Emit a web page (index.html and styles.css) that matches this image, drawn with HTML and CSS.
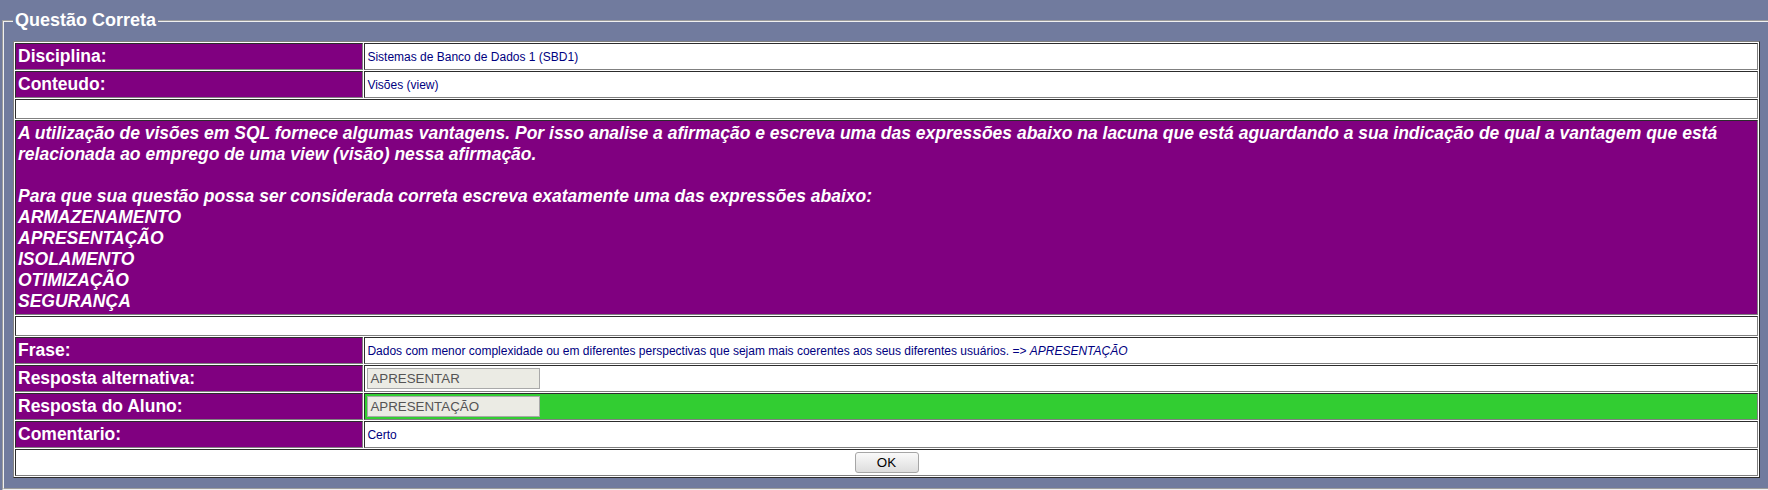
FILE: index.html
```html
<!DOCTYPE html>
<html lang="pt-BR">
<head>
<meta charset="utf-8">
<title>Questão Correta</title>
<link rel="stylesheet" href="styles.css">
</head>
<body>
<fieldset class="panel">
  <legend class="panel-title">Questão Correta</legend>
  <table class="sheet">
    <tr>
      <td class="label">Disciplina:</td>
      <td class="value">Sistemas de Banco de Dados 1 (SBD1)</td>
    </tr>
    <tr>
      <td class="label">Conteudo:</td>
      <td class="value">Visões (view)</td>
    </tr>
    <tr class="gap"><td colspan="2">&nbsp;</td></tr>
    <tr>
      <td class="question" colspan="2">A utilização de visões em SQL fornece algumas vantagens. Por isso analise a afirmação e escreva uma das expressões abaixo na lacuna que está aguardando a sua indicação de qual a vantagem que está relacionada ao emprego de uma view (visão) nessa afirmação.<br><br>Para que sua questão possa ser considerada correta escreva exatamente uma das expressões abaixo:<br>ARMAZENAMENTO<br>APRESENTAÇÃO<br>ISOLAMENTO<br>OTIMIZAÇÃO<br>SEGURANÇA</td>
    </tr>
    <tr class="gap"><td colspan="2">&nbsp;</td></tr>
    <tr>
      <td class="label">Frase:</td>
      <td class="value">Dados com menor complexidade ou em diferentes perspectivas que sejam mais coerentes aos seus diferentes usuários. =&gt; <i>APRESENTAÇÃO</i></td>
    </tr>
    <tr>
      <td class="label">Resposta alternativa:</td>
      <td class="value"><input class="answer" type="text" value="APRESENTAR" readonly></td>
    </tr>
    <tr>
      <td class="label">Resposta do Aluno:</td>
      <td class="value value-correct"><input class="answer" type="text" value="APRESENTAÇÃO" readonly></td>
    </tr>
    <tr>
      <td class="label">Comentario:</td>
      <td class="value">Certo</td>
    </tr>
    <tr>
      <td class="actions" colspan="2"><button class="ok-button" type="button">OK</button></td>
    </tr>
  </table>
</fieldset>
</body>
</html>
```

FILE: styles.css
```css
html, body {
  margin: 0;
  padding: 0;
}

body {
  background: #717b9e;
  font-family: "Liberation Sans", Arial, sans-serif;
  font-size: 12px;
  overflow: hidden;
}

.panel {
  margin: 10px 0 0 2px;
  padding: 10px 9px 10px;
  border: 2px groove #f0f0f0;
  width: 1747px;
  min-width: 0;
}

.panel-title {
  color: #ffffff;
  font-weight: bold;
  font-size: 18px;
  line-height: 21px;
  padding: 0 2px;
}

.sheet {
  width: 100%;
  border: 1px outset #808080;
  border-spacing: 1px;
  background: #ffffff;
}

.sheet td {
  border: 1px inset #808080;
  padding: 2px;
}

.label {
  width: 20%;
  background: #800080;
  color: #ffffff;
  font-weight: bold;
  font-size: 17.5px;
  line-height: 21px;
}

.value {
  color: #000080;
  font-size: 12px;
}

.value-correct {
  background: #32cd32;
}

.gap td {
  font-size: 12px;
  line-height: 14px;
}

.question {
  background: #800080;
  color: #ffffff;
  font-weight: bold;
  font-style: italic;
  font-size: 17.5px;
  line-height: 21px;
}

.answer {
  display: block;
  box-sizing: border-box;
  width: 173px;
  height: 21px;
  margin: 0;
  padding: 0 2px;
  border: 1px solid #a9a9a9;
  background: #ebebe4;
  color: #545454;
  font-family: "Liberation Sans", Arial, sans-serif;
  font-size: 13.33px;
}

.actions {
  text-align: center;
}

.ok-button {
  display: block;
  margin: 0 auto;
  box-sizing: border-box;
  width: 64px;
  height: 21px;
  padding: 0;
  border: 1px solid #a6a6a6;
  border-radius: 3px;
  background: linear-gradient(#fafafa, #dddddd);
  color: #000000;
  font-family: "Liberation Sans", Arial, sans-serif;
  font-size: 13.33px;
}
```
